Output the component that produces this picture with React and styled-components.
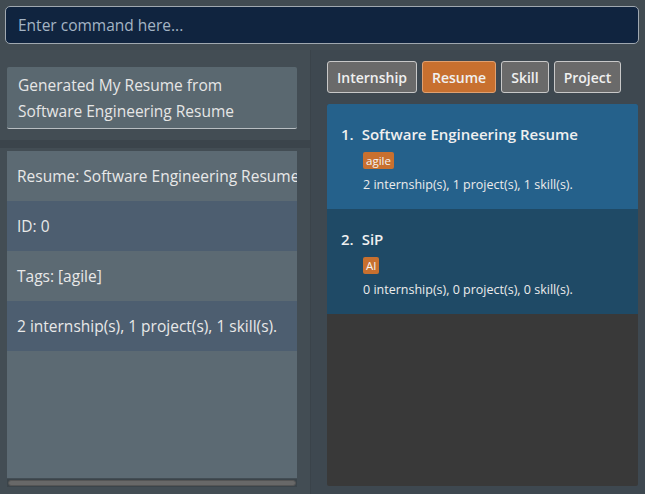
import React from 'react';
import styled, { createGlobalStyle } from 'styled-components';

const GlobalStyle = createGlobalStyle`
  html, body { margin: 0; padding: 0; }
  body {
    background: #3f4850;
    font-family: "Open Sans", "Noto Sans", sans-serif;
  }
`;

const Page = styled.div`
  width: 645px;
  height: 494px;
  display: flex;
  flex-direction: column;
  background: #3f4850;
  overflow: hidden;
`;

const CommandBar = styled.div`
  padding: 6px 6px 6px 5px;
  background: #414b52;
`;

const CommandInput = styled.div`
  height: 38px;
  box-sizing: border-box;
  border: 1px solid #a0a8b0;
  border-radius: 5px;
  background: #10243f;
  color: #a4b4c4;
  font-size: 15.5px;
  display: flex;
  align-items: center;
  padding-left: 12px;
`;

const Main = styled.div`
  flex: 1;
  display: flex;
  min-height: 0;
`;

const LeftPane = styled.div`
  width: 303px;
  padding: 17px 0 0 7px;
  display: flex;
  flex-direction: column;
  border-right: 1px solid #3a434a;
  background: #434d54;
`;

const ResultBox = styled.div`
  width: 290px;
  height: 62px;
  box-sizing: border-box;
  background: #5a6870;
  border-radius: 2px;
  padding: 5px 11px;
  color: #e6e6e6;
  font-size: 15.5px;
  line-height: 26px;
  border-bottom: 1px solid #b8bec2;
`;

const Divider = styled.div`
  height: 8px;
  margin: 11px 0 3px -7px;
  background: #3b444b;
`;

const DetailPanel = styled.div`
  width: 290px;
  height: 327px;
  background: #5c6a73;
  overflow: hidden;
`;

const DetailRow = styled.div`
  height: 50px;
  display: flex;
  align-items: center;
  padding-left: 10px;
  white-space: nowrap;
  color: #e8e8e8;
  font-size: 15.5px;
  background: ${p => (p.$alt ? '#4d5e70' : '#5c6a73')};
`;

const ScrollTrack = styled.div`
  width: 290px;
  height: 8px;
  margin-top: 1px;
  background: #3b444a;
  display: flex;
  align-items: center;
`;

const ScrollThumb = styled.div`
  flex: 1;
  height: 6px;
  margin: 0 1px;
  border-radius: 3px;
  background: #686868;
  border: 1px solid #555;
  box-sizing: border-box;
`;

const RightPane = styled.div`
  flex: 1;
  padding: 11px 7px 8px 16px;
  display: flex;
  flex-direction: column;
  gap: 11px;
  background: #3e4850;
`;

const Tabs = styled.div`
  display: flex;
  gap: 5px;
`;

const TabButton = styled.div`
  height: 32px;
  box-sizing: border-box;
  padding: 0 9px;
  display: flex;
  align-items: center;
  border: 1px solid ${p => (p.$active ? '#e0a070' : '#c8c8c8')};
  border-radius: 3px;
  background: ${p => (p.$active ? '#c8702f' : '#6a6a6a')};
  color: #f0f0f0;
  font-size: 14px;
  font-weight: 600;
`;

const ListPanel = styled.div`
  flex: 1;
  background: #393939;
  border-radius: 2px;
  overflow: hidden;
`;

const Card = styled.div`
  height: 105px;
  box-sizing: border-box;
  padding: 20px 0 0 14px;
  background: ${p => (p.$selected ? '#25618b' : '#1f4a66')};
`;

const CardTitle = styled.div`
  color: #f0f0f0;
  font-size: 15px;
  font-weight: 600;
  display: flex;
  gap: 8px;
`;

const CardBody = styled.div`
  padding-left: 22px;
`;

const Tag = styled.span`
  display: inline-block;
  margin-top: 8px;
  padding: 0 3px;
  height: 17px;
  line-height: 17px;
  background: #c8702f;
  border-radius: 2px;
  color: #f4f4f4;
  font-size: 11.5px;
`;

const CardInfo = styled.div`
  margin-top: 6px;
  color: #ececec;
  font-size: 12.5px;
`;

const resumes = [
  { name: 'Software Engineering Resume', tag: 'agile', info: '2 internship(s), 1 project(s), 1 skill(s).' },
  { name: 'SiP', tag: 'AI', info: '0 internship(s), 0 project(s), 0 skill(s).' },
];

const details = [
  'Resume: Software Engineering Resume',
  'ID: 0',
  'Tags: [agile]',
  '2 internship(s), 1 project(s), 1 skill(s).',
];

export default function App() {
  return (
    <Page>
      <GlobalStyle />
      <CommandBar>
        <CommandInput>Enter command here...</CommandInput>
      </CommandBar>
      <Main>
        <LeftPane>
          <ResultBox>
            Generated My Resume from
            <br />
            Software Engineering Resume
          </ResultBox>
          <Divider />
          <DetailPanel>
            {details.map((d, i) => (
              <DetailRow key={i} $alt={i % 2 === 1}>{d}</DetailRow>
            ))}
          </DetailPanel>
          <ScrollTrack>
            <ScrollThumb />
          </ScrollTrack>
        </LeftPane>
        <RightPane>
          <Tabs>
            <TabButton>Internship</TabButton>
            <TabButton $active>Resume</TabButton>
            <TabButton>Skill</TabButton>
            <TabButton>Project</TabButton>
          </Tabs>
          <ListPanel>
            {resumes.map((r, i) => (
              <Card key={r.name} $selected={i === 0}>
                <CardTitle>
                  <span>{i + 1}.</span>
                  <span>{r.name}</span>
                </CardTitle>
                <CardBody>
                  <Tag>{r.tag}</Tag>
                  <CardInfo>{r.info}</CardInfo>
                </CardBody>
              </Card>
            ))}
          </ListPanel>
        </RightPane>
      </Main>
    </Page>
  );
}
